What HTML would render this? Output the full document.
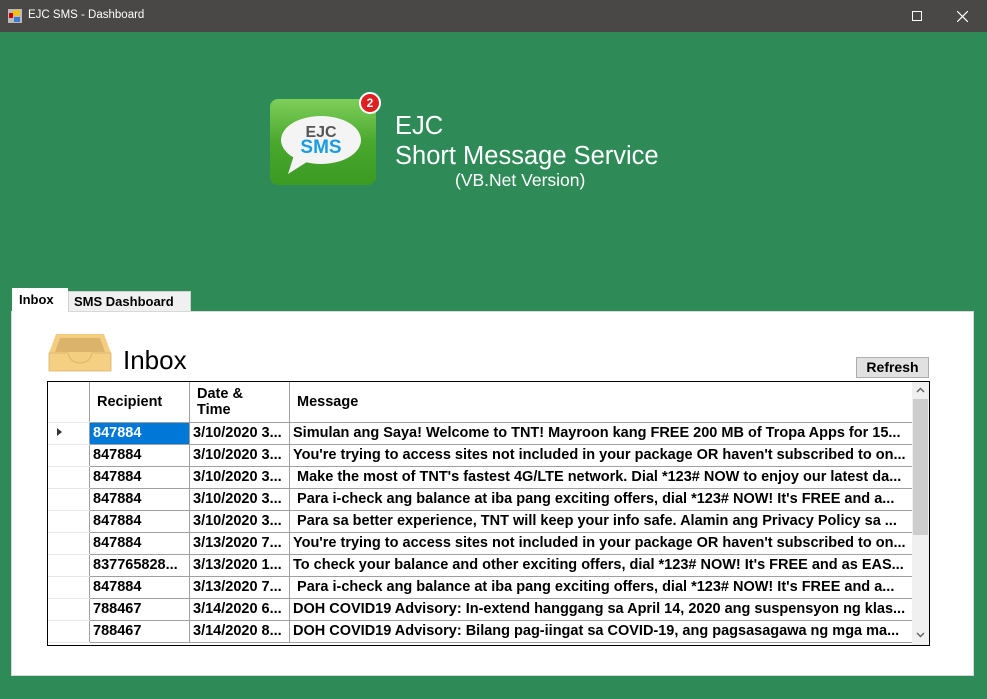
<!DOCTYPE html>
<html><head><style>
*{margin:0;padding:0;box-sizing:border-box}
body{width:987px;height:699px;background:#2e8b57;position:relative;overflow:hidden;font-family:"Liberation Sans",Arial,sans-serif}
.tb{position:absolute;left:0;top:0;width:987px;height:32px;background:#4a4846;color:#fff;font-size:11.5px}
.abs{position:absolute}
table{border-collapse:collapse;table-layout:fixed;font-size:14.5px;font-weight:bold}
td{height:22px;border:1px solid #a0a0a0;padding:0 3px;white-space:nowrap;overflow:hidden;text-overflow:clip;color:#000}
td.rh{border-color:#e8e8e8 #e8e8e8 #e8e8e8 transparent;border-right:1px solid #a0a0a0}
</style></head><body>
<div class="tb">
 <svg class="abs" style="left:8px;top:9px" width="14" height="14"><rect x="0" y="0" width="14" height="14" fill="#bbb"/><rect x="1" y="4" width="4" height="5" fill="#c00"/><rect x="5" y="1" width="7" height="6" fill="#f0c020"/><rect x="6" y="8" width="6" height="5" fill="#3a7bd5"/></svg>
 <span class="abs" style="left:28px;top:9px">EJC SMS - Dashboard</span>
 <div class="abs" style="left:912px;top:11px;width:10px;height:10px;border:1px solid #fff"></div>
 <svg class="abs" style="left:957px;top:11px" width="11" height="11"><path d="M0 0L11 11M11 0L0 11" stroke="#fff" stroke-width="1.2"/></svg>
</div>
<div class="abs" style="left:270px;top:99px;width:106px;height:86px;border-radius:8px;background:linear-gradient(#7fcf5a,#4aa82e 50%,#3a9a22)"></div>
<svg class="abs" style="left:276px;top:110px" width="90" height="70"><ellipse cx="45" cy="30" rx="40" ry="24" fill="#f4f4f4"/><path d="M18 45 L12 64 L34 50Z" fill="#f4f4f4"/>
<text x="45" y="27" text-anchor="middle" font-family="Liberation Sans" font-weight="bold" font-size="16" fill="#555">EJC</text>
<text x="45" y="43" text-anchor="middle" font-family="Liberation Sans" font-weight="bold" font-size="19" fill="#1a9ce0">SMS</text></svg>
<div class="abs" style="left:359px;top:92px;width:22px;height:22px;border-radius:50%;background:#e02020;border:2px solid #fff;color:#fff;font-weight:bold;font-size:12px;text-align:center;line-height:18px">2</div>
<div class="abs" style="left:395px;top:111px;color:#fff;font-size:25.5px;line-height:30px">EJC<br>Short Message Service</div>
<div class="abs" style="left:455px;top:170px;color:#fff;font-size:17.5px">(VB.Net Version)</div>
<div class="abs" style="left:68px;top:291px;width:123px;height:21px;background:#f0f0f0;border:1px solid #d0d0d0;font-size:13px;font-weight:bold;padding:2px 0 0 5px">SMS Dashboard</div>
<div class="abs" style="left:11px;top:311px;width:963px;height:365px;background:#fff;border:1px solid #d8d8d8"></div>
<div class="abs" style="left:12px;top:288px;width:56px;height:25px;background:#fff;font-size:13px;font-weight:bold;padding:4px 0 0 7px">Inbox</div>
<svg class="abs" style="left:48px;top:333px" width="64" height="39"><path d="M8 1H56L63 20V38H1V20Z" fill="#f3cd80"/><path d="M12 5H52L57 19H7Z" fill="#dcb36a"/><path d="M1 20H20Q22 30 32 30Q42 30 44 20H63V38H1Z" fill="#f5cf82" stroke="#d9b068" stroke-width="0.8"/></svg>
<div class="abs" style="left:123px;top:345px;font-size:26px">Inbox</div>
<div class="abs" style="left:856px;top:357px;width:73px;height:21px;background:#e1e1e1;border:1px solid #adadad;font-size:14px;font-weight:bold;text-align:center;line-height:19px">Refresh</div>
<div class="abs" style="left:47px;top:381px;width:883px;height:265px;border:1px solid #000;background:#fff;overflow:hidden">
<table style="width:864px">
<colgroup><col style="width:41px"><col style="width:100px"><col style="width:100px"><col style="width:623px"></colgroup>
<tr><td class="rh" style="height:40px;border-top:0"></td><td style="border-top:0;padding-left:7px">Recipient</td><td style="border-top:0;padding-left:7px;white-space:normal;line-height:16px">Date &amp;<br>Time</td><td style="border-top:0;padding-left:7px">Message</td></tr>
<tr><td class="rh"><svg width="8" height="10" style="margin-left:4px"><path d="M1 1L6 5L1 9Z" fill="#333"/></svg></td><td style="background:#0078d7;color:#fff">847884</td><td>3/10/2020 3...</td><td>Simulan ang Saya! Welcome to TNT! Mayroon kang FREE 200 MB of Tropa Apps for 15...</td></tr>
<tr><td class="rh"></td><td>847884</td><td>3/10/2020 3...</td><td>You're trying to access sites not included in your package OR haven't subscribed to on...</td></tr>
<tr><td class="rh"></td><td>847884</td><td>3/10/2020 3...</td><td>&nbsp;Make the most of TNT's fastest 4G/LTE network. Dial *123# NOW to enjoy our latest da...</td></tr>
<tr><td class="rh"></td><td>847884</td><td>3/10/2020 3...</td><td>&nbsp;Para i-check ang balance at iba pang exciting offers, dial *123# NOW! It's FREE and a...</td></tr>
<tr><td class="rh"></td><td>847884</td><td>3/10/2020 3...</td><td>&nbsp;Para sa better experience, TNT will keep your info safe. Alamin ang Privacy Policy sa ...</td></tr>
<tr><td class="rh"></td><td>847884</td><td>3/13/2020 7...</td><td>You're trying to access sites not included in your package OR haven't subscribed to on...</td></tr>
<tr><td class="rh"></td><td>837765828...</td><td>3/13/2020 1...</td><td>To check your balance and other exciting offers, dial *123# NOW! It's FREE and as EAS...</td></tr>
<tr><td class="rh"></td><td>847884</td><td>3/13/2020 7...</td><td>&nbsp;Para i-check ang balance at iba pang exciting offers, dial *123# NOW! It's FREE and a...</td></tr>
<tr><td class="rh"></td><td>788467</td><td>3/14/2020 6...</td><td>DOH COVID19 Advisory: In-extend hanggang sa April 14, 2020 ang suspensyon ng klas...</td></tr>
<tr><td class="rh"></td><td>788467</td><td>3/14/2020 8...</td><td>DOH COVID19 Advisory: Bilang pag-iingat sa COVID-19, ang pagsasagawa ng mga ma...</td></tr>
</table>
<div class="abs" style="left:864px;top:0;width:17px;height:263px;background:#f0f0f0">
 <svg class="abs" style="left:4px;top:5px" width="9" height="6"><path d="M1 5L4.5 1.5L8 5" stroke="#606060" fill="none" stroke-width="1.4"/></svg>
 <div class="abs" style="left:1px;top:17px;width:15px;height:136px;background:#cdcdcd"></div>
 <svg class="abs" style="left:4px;top:250px" width="9" height="6"><path d="M1 1L4.5 4.5L8 1" stroke="#606060" fill="none" stroke-width="1.4"/></svg>
</div>
</div>
</body></html>
